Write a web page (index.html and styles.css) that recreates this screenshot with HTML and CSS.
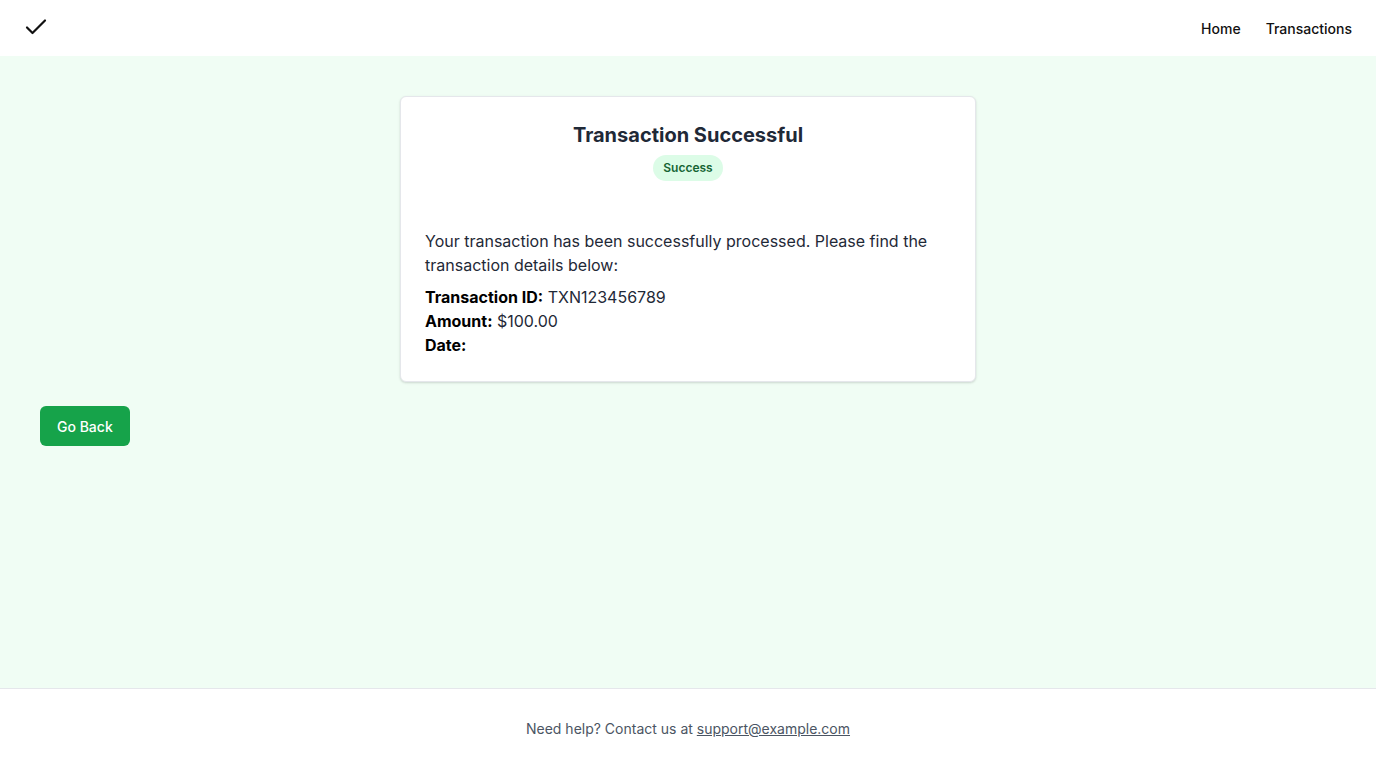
FILE: index.html
```html
<!DOCTYPE html>
<html lang="en">
<head>
<meta charset="utf-8">
<title>Transaction Successful</title>
<link rel="stylesheet" href="styles.css">
</head>
<body>
<div class="page">
  <header class="header">
    <a class="logo" href="#" aria-label="Home">
      <svg width="24" height="24" viewBox="0 0 24 24" fill="none" stroke="#111" stroke-width="2.2" stroke-linecap="round" stroke-linejoin="round"><path d="M3 11.5l5.5 5.5L21 4.5"/></svg>
    </a>
    <nav class="nav">
      <a href="#">Home</a>
      <a href="#">Transactions</a>
    </nav>
  </header>
  <main class="main">
    <section class="card">
      <div class="card-head">
        <h1 class="title">Transaction Successful</h1>
        <span class="badge">Success</span>
      </div>
      <p class="message">Your transaction has been successfully processed. Please find the transaction details below:</p>
      <div class="details">
        <div><strong>Transaction ID:</strong> TXN123456789</div>
        <div><strong>Amount:</strong> $100.00</div>
        <div><strong>Date:</strong> </div>
      </div>
    </section>
    <div class="actions">
      <button class="btn">Go Back</button>
    </div>
  </main>
  <footer class="footer">
    <p>Need help? Contact us at <a href="#">support@example.com</a></p>
  </footer>
</div>
</body>
</html>
```
FILE: styles.css
```css
* { box-sizing: border-box; }
html, body { margin: 0; padding: 0; }
body {
  font-family: Inter, "Noto Sans", sans-serif;
  color: #111827;
  background: #fff;
}
.page {
  min-height: 768px;
  display: flex;
  flex-direction: column;
}
.header {
  height: 56px;
  display: flex;
  align-items: center;
  justify-content: space-between;
  padding: 0 24px;
  background: #fff;
}
.logo { display: flex; }
.nav { display: flex; gap: 25px; }
.nav a {
  color: #111;
  text-decoration: none;
  font-size: 14px;
  font-weight: 500;
}
.main {
  flex: 1;
  background: #f0fdf4;
  padding: 40px 40px;
}
.card {
  width: 576px;
  margin: 0 auto;
  background: #fff;
  border: 1px solid #e5e7eb;
  border-radius: 6px;
  box-shadow: 0 1px 3px rgba(0,0,0,0.1), 0 1px 2px rgba(0,0,0,0.06);
  padding: 24px 24px 24px;
}
.card-head {
  display: flex;
  flex-direction: column;
  align-items: center;
  margin-bottom: 48px;
}
.title {
  margin: 0;
  font-size: 20px;
  line-height: 28px;
  font-weight: 700;
  color: #1f2937;
}
.badge {
  margin-top: 6px;
  display: inline-block;
  background: #dcfce7;
  color: #166534;
  font-size: 12px;
  line-height: 16px;
  font-weight: 600;
  padding: 5px 10px;
  border-radius: 9999px;
}
.message {
  margin: 0 0 8px;
  font-size: 16px;
  line-height: 24px;
  color: #1f2937;
}
.details {
  font-size: 16px;
  line-height: 24px;
  color: #1f2937;
}
.details strong { color: #000; font-weight: 700; }
.actions { margin-top: 24px; }
.btn {
  font-family: inherit;
  background: #16a34a;
  color: #fff;
  border: none;
  border-radius: 6px;
  height: 40px;
  padding: 0 17px;
  font-size: 14px;
  font-weight: 500;
  cursor: pointer;
}
.footer {
  height: 80px;
  border-top: 1px solid #e5e7eb;
  background: #fff;
  display: flex;
  align-items: center;
  justify-content: center;
}
.footer p {
  margin: 0;
  font-size: 14px;
  line-height: 20px;
  color: #4b5563;
}
.footer a { color: #4b5563; text-decoration: underline; }
```
